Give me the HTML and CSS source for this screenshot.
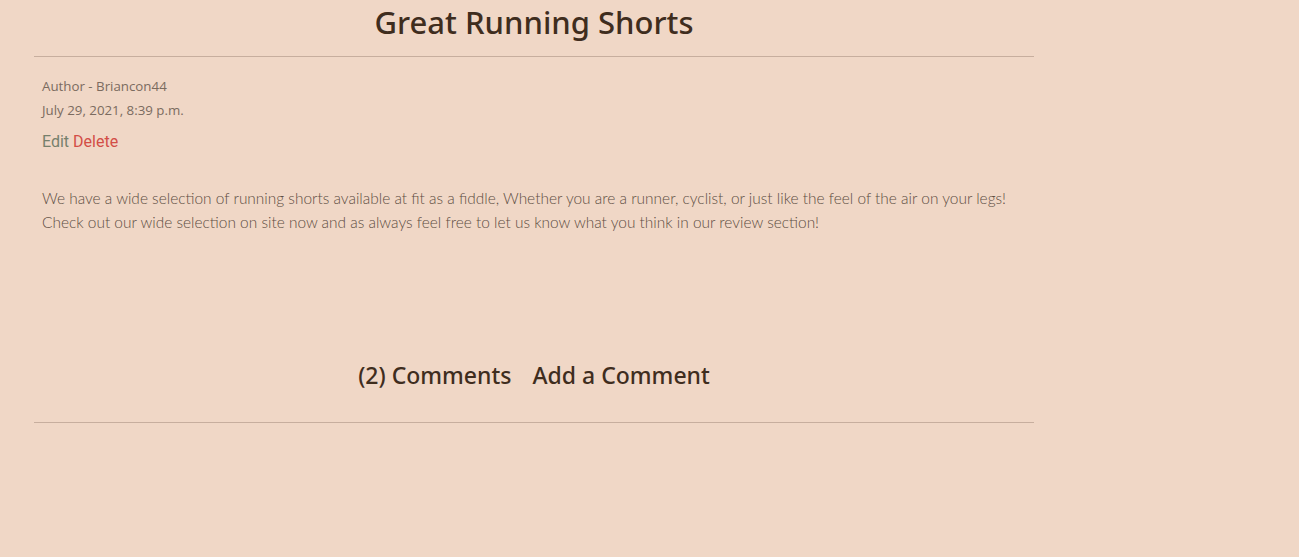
FILE: index.html
```html
<!DOCTYPE html>
<html lang="en">
<head>
<meta charset="utf-8">
<title>Great Running Shorts</title>
<link rel="stylesheet" href="styles.css">
</head>
<body>
<main class="post">
  <h1 class="post-title">Great Running Shorts</h1>
  <hr class="rule">
  <div class="post-body">
    <p class="meta">Author - Briancon44</p>
    <p class="meta date">July 29, 2021, 8:39 p.m.</p>
    <div class="actions"><a class="edit" href="#">Edit</a> <a class="delete" href="#">Delete</a></div>
    <p class="content">We have a wide selection of running shorts available at fit as a fiddle, Whether you are a runner, cyclist, or just like the feel of the air on your legs!<br>Check out our wide selection on site now and as always feel free to let us know what you think in our review section!</p>
  </div>
  <div class="comments-bar">
    <h2 class="comments-title">(2) Comments</h2>
    <h2 class="comments-title">Add a Comment</h2>
  </div>
  <hr class="rule">
</main>
</body>
</html>
```

FILE: styles.css
```css
html, body {
  margin: 0;
  padding: 0;
  background: #f0d7c6;
}
body {
  font-family: "Open Sans", "Noto Sans", sans-serif;
  color: #3f2e20;
}
.post {
  width: 1000px;
  margin-left: 34px;
}
.post-title {
  margin: 0;
  padding-top: 0;
  height: 56px;
  line-height: 44px;
  font-size: 31px;
  font-weight: 500;
  text-align: center;
  color: #3f2d1e;
  font-family: "Noto Sans", sans-serif;
}
.rule {
  margin: 0;
  border: 0;
  border-top: 1px solid #c7ae9e;
  height: 0;
}
.post-body {
  padding: 17px 8px 0;
  height: 300px;
  box-sizing: border-box;
}
.meta {
  margin: 0;
  font-size: 13.3px;
  line-height: 24px;
  color: #7b6b5f;
}
.actions {
  margin-top: 10px;
  font-family: Roboto, sans-serif;
  font-size: 16px;
  line-height: 20px;
}
.actions a { text-decoration: none; }
.edit { color: #76806c; }
.delete { color: #d34e47; }
.content {
  margin: 34px 0 0;
  font-family: Lato, "Open Sans", sans-serif;
  font-size: 15.45px;
  font-weight: 300;
  line-height: 24px;
  color: #5e4e43;
  white-space: nowrap;
}
.comments-bar {
  display: flex;
  justify-content: center;
  gap: 21px;
  height: 65px;
  padding-top: 0;
}
.comments-title {
  margin: 0;
  font-family: "Noto Sans", sans-serif;
  font-size: 23px;
  font-weight: 500;
  line-height: 36px;
  color: #3f2d1e;
}
```
